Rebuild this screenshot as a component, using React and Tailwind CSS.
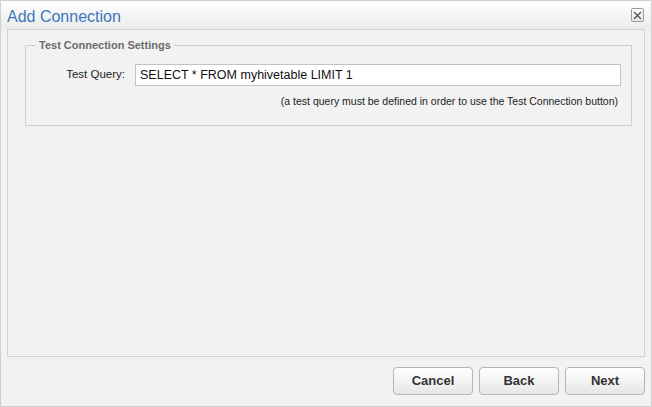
import React from "react";

function CloseIcon() {
  return (
    <button className="w-[13px] h-[14px] border border-[#9a9a9a] rounded-[2px] bg-gradient-to-b from-white to-[#e6e6e6] flex items-center justify-center">
      <svg width="9" height="9" viewBox="0 0 9 9" fill="none" stroke="#555" strokeWidth="1.4">
        <path d="M1 1l7 7M8 1l-7 7" />
      </svg>
    </button>
  );
}

function Btn({ children }) {
  return (
    <button className="w-[80px] h-[28px] rounded-[4px] border border-[#b5b5b5] bg-gradient-to-b from-white to-[#e6e6e6] text-[13px] font-bold text-[#333] font-['Liberation_Sans',Arial,sans-serif]">
      {children}
    </button>
  );
}

export default function App() {
  return (
    <div className="w-[652px] h-[407px] border border-[#cfcfcf] bg-[#f2f2f2] flex flex-col font-['Liberation_Sans',Arial,sans-serif]">
      <div className="h-[28px] shrink-0 bg-gradient-to-b from-white to-[#ebebeb] flex items-center justify-between pl-[6px] pr-[7px]">
        <span className="text-[16px] text-[#3a77bd] leading-none mt-[3px]">Add Connection</span>
        <CloseIcon />
      </div>

      <div className="flex-1 mx-[6px] border border-[#d2d2d2] pt-[7px] pl-[17px] pr-[12px]">
        <fieldset className="border border-[#d0d0d0] pl-[10px] pr-[10px] pb-[16px]">
          <legend className="px-[3px] text-[11px] font-bold text-[#6b6b6b]">Test Connection Settings</legend>
          <div className="flex items-center mt-[10px]">
            <label className="w-[99px] text-right pr-[10px] text-[11.5px] text-[#222]">Test Query:</label>
            <input
              readOnly
              value="SELECT * FROM myhivetable LIMIT 1"
              className="flex-1 h-[22px] border border-[#c2c2c2] bg-white px-[4px] text-[12.5px] text-[#111] outline-none"
            />
          </div>
          <div className="text-right text-[10.5px] text-[#222] mt-[8px] pr-[3px]">
            (a test query must be defined in order to use the Test Connection button)
          </div>
        </fieldset>
      </div>

      <div className="h-[49px] shrink-0 flex justify-end gap-[6px] pt-[10px] pr-[6px]">
        <Btn>Cancel</Btn>
        <Btn>Back</Btn>
        <Btn>Next</Btn>
      </div>
    </div>
  );
}
